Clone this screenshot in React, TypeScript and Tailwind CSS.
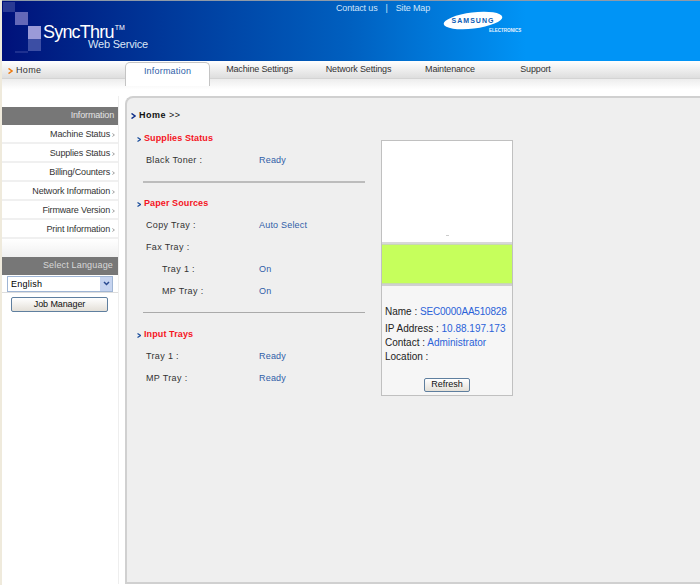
import React from "react";

const sideLinks = [
  "Machine Status",
  "Supplies Status",
  "Billing/Counters",
  "Network Information",
  "Firmware Version",
  "Print Information",
];

const tabs = [
  { label: "Machine Settings", width: "w-[99px]" },
  { label: "Network Settings", width: "w-[99px]" },
  { label: "Maintenance", width: "w-[84px]" },
  { label: "Support", width: "w-[87px]" },
];

function Row({ label, value, indent }: { label: string; value?: string; indent?: boolean }) {
  return (
    <div className="flex h-[22px] items-center text-[9px] tracking-[0.35px] text-[#333]">
      <span className={indent ? "w-[113px] pl-[16px]" : "w-[113px]"}>{label}</span>
      <span className="tracking-[0.2px] text-[#2f5ea8]">{value}</span>
    </div>
  );
}

function SectionTitle({ children }: { children: React.ReactNode }) {
  return (
    <div className="flex h-[20px] -translate-y-[1px] items-center gap-[3px] text-[9px] font-bold tracking-[0.1px] text-[#f5141e]">
      <svg width="4" height="5" viewBox="0 0 4 5" className="-ml-px shrink-0">
        <path d="M0.5 0.5 L3.5 2.5 L0.5 4.5" fill="none" stroke="#1d4f9c" strokeWidth="1.2" />
      </svg>
      {children}
    </div>
  );
}

export default function App() {
  return (
    <div className="h-[585px] w-[700px] overflow-hidden bg-[#efeadc] pl-[2px] font-['Liberation_Sans',Arial,sans-serif]">
      <div className="h-full bg-white">
        {/* Header */}
        <div className="flex h-[61px] border-t border-[#8f9aa8] bg-gradient-to-r from-[#00107a] via-[#0060c0] to-[#0094f6] to-75%">
          <div className="relative w-[334px] shrink-0">
            <svg width="44" height="54" viewBox="0 0 44 54" className="absolute left-0 top-0">
              <rect x="1" y="1" width="12" height="10" fill="#2a3a94" />
              <rect x="13" y="11" width="13" height="13" fill="#6468b8" />
              <rect x="26" y="25" width="13" height="13" fill="#9a9ad8" />
              <rect x="26" y="38" width="13" height="12" fill="#3c4ea4" />
              <rect x="13" y="50" width="13" height="2" fill="#1e3090" />
            </svg>
            <div className="absolute left-[41px] top-[24px] whitespace-nowrap text-[18px] leading-[15px] tracking-[-0.8px] text-white">
              SyncThru<sup className="top-[-8px] ml-[1px] align-baseline text-[7px] leading-none tracking-normal">TM</sup>
            </div>
            <div className="absolute left-[86px] top-[39px] whitespace-nowrap text-[11px] leading-[9px] tracking-[-0.2px] text-[#dbe6f6]">
              Web Service
            </div>
          </div>
          <div className="flex h-[16px] items-center text-[9px] tracking-[-0.15px] text-[#cfe4fa]">
            <span>Contact us</span>
            <span className="mx-[8px]">|</span>
            <span>Site Map</span>
          </div>
          <div className="relative ml-[13px] w-[90px]">
            <svg width="62" height="24" viewBox="0 0 62 24" className="absolute left-0 top-[8px]">
              <ellipse cx="30" cy="11.5" rx="29.5" ry="8" transform="rotate(-7 30 11.5)" fill="#fff" />
              <text x="30" y="14" textAnchor="middle" fontSize="7" fontWeight="700" letterSpacing="1" fill="#0c5cb4">
                SAMSUNG
              </text>
            </svg>
            <span className="absolute left-[46px] top-[27px] whitespace-nowrap text-[4.5px] font-bold leading-[6px] text-[#e8f4ff]">
              ELECTRONICS
            </span>
          </div>
        </div>

        {/* Nav */}
        <div className="flex h-[18px] items-center border-b border-[#d4d4d4] bg-gradient-to-b from-white to-[#dedede]">
          <div className="flex w-[123px] translate-y-[1px] items-center gap-[3px] pl-[6px] text-[9px] tracking-[0.35px] text-[#333]">
            <svg width="5" height="6" viewBox="0 0 5 6">
              <path d="M0.5 0.5 L4 3 L0.5 5.5" fill="none" stroke="#ee7a10" strokeWidth="1.5" />
            </svg>
            Home
          </div>
          <div className="relative z-10 mt-[1px] flex h-[24px] w-[85px] translate-y-[4px] items-start justify-center rounded-t-[5px] border border-b-0 border-[#c4c4c4] bg-white pt-[2px] text-[9px] tracking-[0.2px] text-[#2f5ea8]">
            Information
          </div>
          <div className="flex">
            {tabs.map((tab) => (
              <div key={tab.label} className={`${tab.width} whitespace-nowrap text-center text-[9px] tracking-[-0.15px] text-[#333]`}>
                {tab.label}
              </div>
            ))}
          </div>
        </div>

        <div className="h-[17px] bg-gradient-to-b from-[#ededed] to-white to-60%" />

        {/* Body */}
        <div className="flex h-[488px]">
          <div className="w-[123px] shrink-0">
            <div className="h-full w-[117px] border-r border-[#eee] pt-[11px]">
              <div className="flex h-[18px] w-[116px] items-center justify-end bg-[#777] pr-[4px] text-[9px] tracking-[-0.15px] text-[#e4e4e4]">
                Information
              </div>
              {sideLinks.map((link) => (
                <div key={link} className="flex h-[19px] w-[116px] items-center justify-end gap-[2px] border-b-2 border-[#f0f0f0] pr-[3px] pt-[2px] text-[9px] tracking-[-0.15px] text-[#333]">
                  {link}
                  <svg width="3" height="4" viewBox="0 0 3 4">
                    <path d="M0.4 0.5 L2.4 2 L0.4 3.5" fill="none" stroke="#888" strokeWidth="0.8" />
                  </svg>
                </div>
              ))}
              <div className="h-[18px] w-[116px] bg-gradient-to-b from-white to-[#f0f0f0]" />
              <div className="flex h-[18px] w-[116px] items-center justify-end bg-[#777] pr-[5px] text-[9px] tracking-[0.17px] text-[#d8d8d8]">
                Select Language
              </div>
              <div className="flex h-[18px] w-[116px] flex-col border-b border-[#ddd] pl-[5px] pt-[1px]">
                <div className="flex h-[16px] w-[106px] items-center justify-between border border-[#9fb5d4] bg-white pl-[3px] pt-px text-[9px] tracking-[0.25px] text-black">
                  English
                  <span className="flex h-[14px] w-[12px] -translate-y-px items-center justify-center bg-[#c6d4f0]">
                    <svg width="7" height="5" viewBox="0 0 7 5">
                      <path d="M1 1 L3.5 3.5 L6 1" fill="none" stroke="#2a4a90" strokeWidth="1.5" />
                    </svg>
                  </span>
                </div>
              </div>
              <div className="ml-[9px] mt-[4px] flex h-[15px] w-[97px] items-center justify-center rounded-[2px] border border-[#5f7f9f] bg-gradient-to-b from-white to-[#e4e0d8] text-[9px] tracking-[-0.1px] text-[#111]">
                Job Manager
              </div>
            </div>
          </div>

          {/* Main panel */}
          <div className="flex h-[488px] flex-1 rounded-tl-[8px] border-y-2 border-l-2 border-[#d0d0d0] bg-[#efefef]">
            <div className="w-[254px] shrink-0 pl-[4px] pt-[11px]">
              <div className="flex h-[14px] items-center gap-[3px] text-[9px] font-bold tracking-[0.5px] text-[#111]">
                <svg width="5" height="6" viewBox="0 0 5 6">
                  <path d="M0.5 0.5 L4 3 L0.5 5.5" fill="none" stroke="#10308a" strokeWidth="1.5" />
                </svg>
                <span>Home <span className="font-normal">&gt;&gt;</span></span>
              </div>
              <div className="mt-[7px] pl-[7px]">
                <SectionTitle>Supplies Status</SectionTitle>
                <div className="pl-[8px]">
                  <Row label="Black Toner :" value="Ready" />
                </div>
                <div className="mb-[12px] ml-[5px] mt-[9px] h-[2px] w-[222px] bg-[#bcbcbc]" />
                <SectionTitle>Paper Sources</SectionTitle>
                <div className="pl-[8px]">
                  <Row label="Copy Tray :" value="Auto Select" />
                  <Row label="Fax Tray :" />
                  <Row label="Tray 1 :" value="On" indent />
                  <Row label="MP Tray :" value="On" indent />
                </div>
                <div className="mb-[13px] ml-[5px] mt-[9px] h-[1px] w-[222px] bg-[#aaa]" />
                <SectionTitle>Input Trays</SectionTitle>
                <div className="pl-[8px]">
                  <Row label="Tray 1 :" value="Ready" />
                  <Row label="MP Tray :" value="Ready" />
                </div>
              </div>
            </div>

            {/* Device card */}
            <div className="mt-[42px] h-[256px] w-[132px] shrink-0 border border-[#c0c0c0]">
              <div className="flex h-[101px] items-end justify-center bg-white pb-[6px]">
                <span className="h-px w-[3px] bg-[#ccc]" />
              </div>
              <div className="h-[2px] bg-[#d8d8d8]" />
              <div className="h-[40px] border-y border-[#c8d8b0] bg-[#c6ff5c]" />
              <div className="h-[2px] bg-[#d0d0d0]" />
              <div className="h-[109px] whitespace-nowrap bg-[#f6f6f6] pl-[3px] pt-[19px] text-[10px] text-[#222]">
                <div className="h-[17px] leading-[13px]">Name : <span className="tracking-[-0.2px] text-[#2a62d8]">SEC0000AA510828</span></div>
                <div className="h-[14px] leading-[13px]">IP Address : <span className="text-[#2a62d8]">10.88.197.173</span></div>
                <div className="h-[14px] leading-[13px]">Contact : <span className="text-[#2a62d8]">Administrator</span></div>
                <div className="h-[14px] leading-[13px]">Location :</div>
                <div className="mt-[14px] flex justify-center pr-[3px]">
                  <div className="flex h-[14px] w-[46px] items-center justify-center rounded-[2px] border border-[#5f7f9f] bg-gradient-to-b from-white to-[#e4e0d8] text-[9px] text-[#111]">
                    Refresh
                  </div>
                </div>
              </div>
            </div>
          </div>
        </div>
      </div>
    </div>
  );
}
